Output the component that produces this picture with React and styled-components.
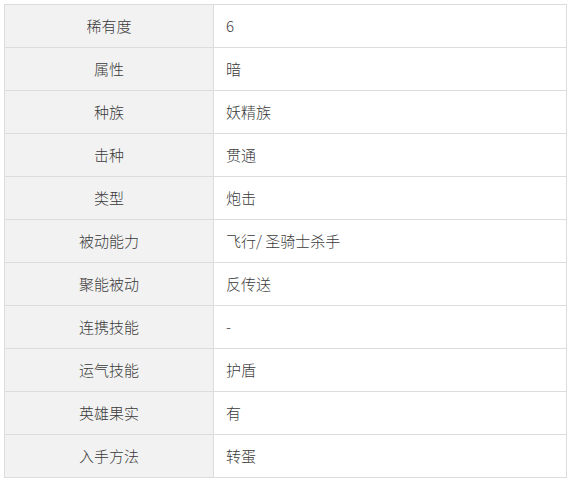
import { createGlobalStyle, styled } from 'styled-components';

const GlobalStyle = createGlobalStyle`
    body {
        margin: 0;
        background: #fff;
        font-family: "Noto Sans CJK SC", "Noto Sans", sans-serif;
    }
`;

const rows = [
    ['稀有度', '6'],
    ['属性', '暗'],
    ['种族', '妖精族'],
    ['击种', '贯通'],
    ['类型', '炮击'],
    ['被动能力', '飞行/ 圣骑士杀手'],
    ['聚能被动', '反传送'],
    ['连携技能', '-'],
    ['运气技能', '护盾'],
    ['英雄果实', '有'],
    ['入手方法', '转蛋'],
];

export default function App() {
    return (
        <>
            <GlobalStyle />
            <Wrap>
                <Table>
                    <tbody>
                        {rows.map(([label, value]) => (
                            <tr key={label}>
                                <Th>{label}</Th>
                                <Td>{value}</Td>
                            </tr>
                        ))}
                    </tbody>
                </Table>
            </Wrap>
        </>
    );
}

const Wrap = styled.div`
    padding: 4px;
`;

const Table = styled.table`
    width: 563px;
    border-collapse: collapse;
    table-layout: fixed;
    border: 1px solid #dcdcdc;
`;

const Th = styled.th`
    width: 208px;
    height: 40px;
    padding: 0 0 2px;
    background: #f2f2f2;
    border: 1px solid #dcdcdc;
    text-align: center;
    font-weight: 300;
    font-size: 15px;
    color: #3a3a3a;
`;

const Td = styled.td`
    height: 40px;
    padding: 0 12px 2px;
    background: #fff;
    border: 1px solid #dcdcdc;
    text-align: left;
    font-weight: 300;
    font-size: 15px;
    color: #3a3a3a;
`;
